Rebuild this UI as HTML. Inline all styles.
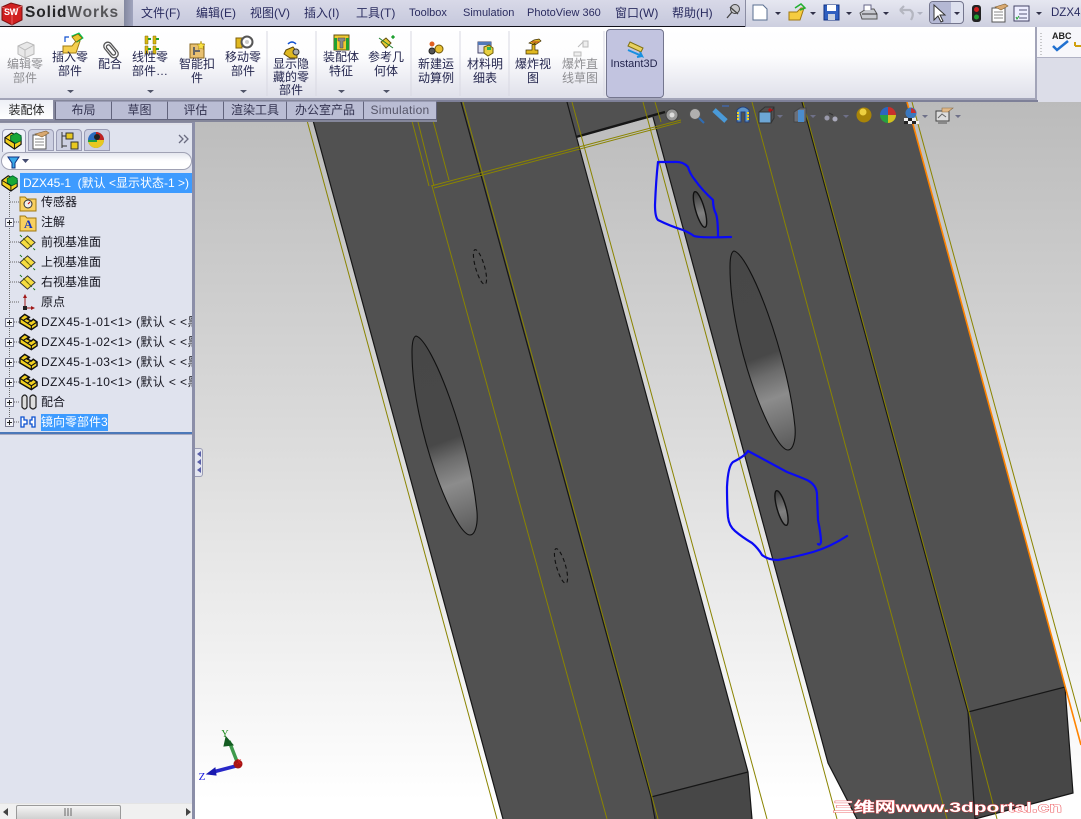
<!DOCTYPE html>
<html><head><meta charset="utf-8">
<style>
html,body{margin:0;padding:0;width:1081px;height:819px;overflow:hidden;background:#fff}
*{box-sizing:border-box}
body{position:relative;font:12px/14px "Liberation Sans","WenQuanYi Zen Hei","Noto Sans CJK SC",sans-serif;color:#222250}
.a{position:absolute;white-space:nowrap}
.c{position:absolute;white-space:nowrap;transform:translateX(-50%);text-align:center}
svg{position:absolute;left:0;top:0}
.m{top:6px;color:#2a2c60}
.l{color:#24264e;line-height:14px}
.g{color:#8e8e92}
.t{position:absolute;top:101px;height:19px;background:#babdd4;border:1px solid #62647c;border-top:1px solid #9a9cb4;text-align:center;line-height:16px;color:#333350}
.r{position:absolute;left:41px;color:#15151f;height:16px;line-height:16px;white-space:nowrap;width:151px;overflow:hidden}
.p{letter-spacing:.4px}
</style></head><body>

<svg width="1081" height="819" viewBox="0 0 1081 819" fill="none">
<defs>
<linearGradient id="bg" x1="0" y1="102" x2="0" y2="800" gradientUnits="userSpaceOnUse"><stop offset="0" stop-color="#bbbbbb"/><stop offset=".55" stop-color="#e0e0e0"/><stop offset="1" stop-color="#ffffff"/></linearGradient>
<linearGradient id="h" gradientUnits="userSpaceOnUse" x1="417" y1="336" x2="490" y2="535"><stop offset="0" stop-color="#474747"/><stop offset=".51" stop-color="#484848"/><stop offset=".6" stop-color="#6c6c6c"/><stop offset=".716" stop-color="#8c8c8c"/><stop offset=".945" stop-color="#5e5e5e"/></linearGradient>
<linearGradient id="s" x1="0" y1="0" x2="0" y2="1"><stop offset="0" stop-color="#3a3a3a"/><stop offset=".6" stop-color="#808080"/><stop offset="1" stop-color="#666"/></linearGradient>
<path id="hole" d="M416 336C432 340 470 440 477 512C478 525 475 535 470 535C455 535 412 430 412 352C412 343 413 337 416 336Z"/>
</defs>
<rect x="195" y="102" width="886" height="717" fill="url(#bg)"/>
<path d="M308 102H907L1065 687 1073 793 975 819H857L828 763 653 117 576 137 748 772 752 819H503Z" fill="#515151"/>
<path d="M651 797L748 772 752 819H655ZM968 712L1065 687 1073 793 975 819Z" fill="#474747"/>
<g stroke="#161616" stroke-width="1.2">
<path d="M308 102L503 819M461 102L651 797 655 819M567 102L748 772 752 819M653 117L828 763 857 819M802 102L968 712 975 819"/>
<path d="M651 797L748 772M968 712L1065 687 1073 793 975 819"/>
<path d="M576 137L665 112" stroke-width="2.4"/>
</g>
<g stroke="#8a8400" stroke-width="1">
<path d="M302 102L497 819M407 102L429 186M413 102L434 186M428 102L449 180M432 186L607 819"/>
<path d="M431 186L681 120M434 188L681 122"/>
<path d="M463 102L652 797 658 819M572 102L767 819M643 102L837 819M655 102L661 122M752 102L947 819M803 102L969 712 997 819M912 102L1081 722"/>
</g>
<path d="M907 102L1081 745" stroke="#ff8400" stroke-width="1.6"/>
<g stroke="#111" stroke-width="1.1">
<use href="#hole" fill="url(#h)"/>
<use href="#hole" fill="url(#h)" transform="translate(318 -85)"/>
<ellipse cx="700" cy="209.500" rx="4.500" ry="18.500" transform="rotate(-16 700 209.500)" fill="url(#s)" stroke-width="1.400"/>
<ellipse cx="781.500" cy="508" rx="4.500" ry="18" transform="rotate(-16 781.500 508)" fill="url(#s)" stroke-width="1.400"/>
<ellipse cx="480" cy="267" rx="4.500" ry="18" transform="rotate(-16 480 267)" stroke-dasharray="4 3"/>
<ellipse cx="561" cy="566" rx="4.500" ry="18" transform="rotate(-16 561 566)" stroke-dasharray="4 3"/>
</g>
<g stroke="#0a0af5" stroke-width="2.200" stroke-linejoin="round" stroke-linecap="round">
<path d="M658 162L673 162Q683 161 688 167Q690 174 695 180Q702 190 713 200Q713 208 716 214Q718 220 718 237M658 162Q656 180 655 205Q655 217 658 220Q670 226 683 230Q690 233 694 236Q700 238 731 237"/>
<path d="M748 451Q745 456 733 462Q728 466 727 487Q727 505 728 517Q729 526 735 531Q742 537 752 543Q758 548 762 555Q768 560 778 560Q795 557 813 552Q830 547 847 536M748 451Q765 460 787 472Q800 477 807 480Q817 485 817 495L818 520Q821 535 821 542Q820 546 818 544"/>
</g>
<!-- triad -->
<path d="M238 764L229 741" stroke="#3f9a4c" stroke-width="3.500"/>
<path d="M226 737L233 745 224 746Z" fill="#145c22" stroke="#145c22"/>
<path d="M236 766L213 772" stroke="#2828c8" stroke-width="3.500"/>
<path d="M207 774L215 768 216 775Z" fill="#1a1ab0" stroke="#1a1ab0"/>
<circle cx="238" cy="764" r="4.500" fill="#a81414"/>
<text x="225" y="737" font-family="Liberation Serif" font-size="10" fill="#1a8a1a" text-anchor="middle">Y</text>
<text x="202" y="780" font-family="Liberation Serif" font-size="11" fill="#1818e0" text-anchor="middle">Z</text>
<text x="239" y="764" font-family="Liberation Serif" font-size="7" fill="#e02020" text-anchor="middle">X</text>
<!-- heads-up view toolbar -->
<g>
<circle cx="672" cy="115" r="6" fill="#9a9a9a" stroke="#444"/><circle cx="672" cy="115" r="2.500" fill="#ddd"/>
<circle cx="695" cy="114" r="5.500" fill="#b0b0b0" stroke="#555"/><path d="M699 118L704 123" stroke="#2f6db5" stroke-width="2"/>
<path d="M714 110L726 121" stroke="#4a9ad8" stroke-width="5"/><path d="M722 106H729" stroke="#3a6ed0"/>
<path d="M737 122V110Q743 104 749 110V122H745V112H741V122Z" fill="#5d93c9" stroke="#23407a"/><path d="M738 112V121M748 112V121" stroke="#f0d020" stroke-width="2" stroke-dasharray="2 1"/>
<rect x="759" y="112" width="12" height="11" fill="#6da6d6" stroke="#333"/><path d="M759 112L765 107H774V118L771 123M771 112L774 107" stroke="#333"/><path d="M768 110h5M770 108v4" stroke="#c00"/>
<path d="M794 112L800 108H806V122H794Z" fill="#6b6f78" stroke="#444"/><rect x="798" y="110" width="6" height="12" fill="#4b8ccc"/>
<circle cx="827" cy="118" r="3" fill="#99a" stroke="#555"/><circle cx="835" cy="119" r="3" fill="#aab" stroke="#555"/><path d="M829 113L833 115" stroke="#333"/>
<circle cx="864" cy="115" r="7.500" fill="#a88408"/><circle cx="863" cy="112" r="3.500" fill="#eed040"/>
<path d="M888 115V107A8 8 0 0 1 896 115Z" fill="#c8302c"/><path d="M888 115V107A8 8 0 0 0 880 115Z" fill="#2c66c0"/><path d="M880 115A8 8 0 0 0 888 123V115Z" fill="#28a040"/><path d="M888 123A8 8 0 0 0 896 115H888Z" fill="#d0c020"/>
<circle cx="911" cy="113" r="5.500" fill="#3a78c0"/><path d="M911 108a5.500 5.500 0 0 1 5 5h-5z" fill="#c83030"/><path d="M904 118h4v3h-4zM912 118h4v3h-4zM908 121h4v3h-4zM916 121h3v3h-3z" fill="#eee"/><path d="M908 118h4v3h-4zM904 121h4v3h-4zM912 121h4v3h-4z" fill="#222"/>
<rect x="936" y="111" width="13" height="10" fill="#ddd" stroke="#444"/><path d="M938 118L942 114 946 117" stroke="#666"/><path d="M942 108H953L948 112H942Z" fill="#e0b888" stroke="#8a6a40" stroke-width=".6"/><path d="M938 123H947" stroke="#555"/>
</g>
<g fill="#6e7088"><path d="M777 115H783L780 118ZM810 115H816L813 118ZM843 115H849L846 118ZM922 115H928L925 118ZM955 115H961L958 118Z"/></g>
</svg>

<!-- watermark -->
<svg width="1081" height="819" viewBox="0 0 1081 819"><text x="833" y="812" font-family="Liberation Sans,WenQuanYi Zen Hei,sans-serif" font-size="14" font-weight="bold" textLength="229" lengthAdjust="spacingAndGlyphs" fill="#fff" stroke="#e8343a" stroke-width=".7" paint-order="stroke">三维网www.3dportal.cn</text></svg>

<!-- top menu bar -->
<div class="a" style="left:0;top:0;width:745px;height:27px;background:linear-gradient(#d8d9e8,#c6c8dc);border-bottom:1px solid #101018"></div>
<div class="a" style="left:0;top:0;width:124px;height:26px;background:linear-gradient(#dedee2,#c6c6ce)"></div>
<div class="a" style="left:124px;top:0;width:9px;height:26px;background:linear-gradient(90deg,#83889f,#a0a4bd)"></div>
<div class="a" style="left:745px;top:0;width:336px;height:27px;background:linear-gradient(#e6e7f1,#cdcfdf);border-left:1px solid #8a8ca2"></div>
<div class="a" style="left:25px;top:3px;font:bold 15.500px/20px 'Liberation Sans',sans-serif;letter-spacing:.9px"><span style="color:#262628">Solid</span><span style="color:#555558">Works</span></div>
<svg width="1081" height="130" viewBox="0 0 1081 130" fill="none">
<path d="M2 7L11 3 22 6V20L12 25 2 20Z" fill="#d02020" stroke="#7a1010"/><path d="M2 7L12 11 22 6M12 11V25" stroke="#f08080" stroke-width=".7"/>
<!-- pin -->
<circle cx="735" cy="9" r="4.500" fill="#c8c8cc" stroke="#444"/><path d="M732 12L727 18M730 7L738 14" stroke="#444" stroke-width="1.300"/>
</svg>
<div class="a" style="left:4px;top:7px;font:bold 9px/10px 'Liberation Sans';color:#fff;letter-spacing:-.3px">SW</div>
<span class="a m" style="left:141px">文件(F)</span><span class="a m" style="left:196px">编辑(E)</span><span class="a m" style="left:250px">视图(V)</span><span class="a m" style="left:304px">插入(I)</span><span class="a m" style="left:356px">工具(T)</span>
<span class="a m" style="left:409px;font-size:11px">Toolbox</span><span class="a m" style="left:463px;font-size:11px">Simulation</span><span class="a m" style="left:527px;font-size:11px">PhotoView 360</span>
<span class="a m" style="left:615px">窗口(W)</span><span class="a m" style="left:672px">帮助(H)</span>
<span class="a" style="left:1051px;top:6px;font-size:11.500px;color:#2a2c60">DZX45</span>
<div class="a" style="left:929px;top:1px;width:35px;height:23px;border:1px solid #74768e;border-radius:4px;background:#dde0ee"></div>
<div class="a" style="left:930px;top:2px;width:21px;height:21px;background:#b4b8d4;border-radius:3px 0 0 3px"></div>

<!-- ribbon -->
<div class="a" style="left:0;top:27px;width:1037px;height:73px;background:linear-gradient(#ffffff 0,#fdfdfe 40%,#dfe0ea 100%);border-right:2px solid #a2a4b8;border-bottom:2px solid #a2a4b8"></div>
<div class="a" style="left:1037px;top:27px;width:44px;height:31px;background:#f7f7fb;border-bottom:1px solid #b0b2c4"></div>
<div class="a" style="left:1037px;top:58px;width:44px;height:44px;background:#dcdde8"></div>
<div class="a" style="left:606px;top:29px;width:58px;height:69px;background:#c2c4e0;border:1px solid #74768e;border-radius:4px"></div>
<div class="a" style="left:0;top:100px;width:437px;height:22px;background:#84869a"></div>
<div class="a" style="left:437px;top:100px;width:601px;height:2px;background:#7e8098"></div>

<svg width="1081" height="130" viewBox="0 0 1081 130" fill="none" style="z-index:2">
<g stroke="#d8d8e2"><path d="M267 31V96M316 31V96M411 31V96M460 31V96M509 31V96M604 31V96"/></g>
<!-- edit part -->
<path d="M18 46L27 42 34 45V54L25 58 18 54Z" fill="#e8e8e8" stroke="#b8b8b8"/><path d="M18 46L25 50 34 45M25 50V58" stroke="#bbb"/>
<!-- insert -->
<path d="M63 46H72L76 41H80L76 53H63Z" fill="#f5cf50" stroke="#a07a10"/><path d="M72 36L79 33 83 38 77 42Z" fill="#2aa040" stroke="#0c5"/><path d="M72 37L78 34 82 38 76 42Z" fill="#e8c830" stroke="#806008" stroke-width=".7"/><path d="M65 42V37H69" stroke="#1050d0" stroke-width="1.200"/>
<!-- mate clip -->
<g transform="rotate(-40 111 50)" stroke="#555" stroke-width="1.300"><rect x="107" y="41" width="8" height="18" rx="4"/><rect x="109" y="44" width="4" height="12" rx="2"/></g>
<!-- linear pattern -->
<path d="M145 36h3v8h-3zM153 36h3v8h-3zM145 46h3v8h-3zM153 46h3v8h-3z" fill="#d8b810" stroke="#806a00" stroke-width=".5"/><path d="M148 38h3v2h-3zM156 38h3v2h-3zM148 48h3v2h-3zM156 48h3v2h-3z" fill="#20a030"/>
<!-- smart fastener -->
<rect x="190" y="44" width="14" height="14" fill="#e8c070" stroke="#8a6820"/><path d="M194 51h6M194 47v8" stroke="#666" stroke-width="2"/><path d="M201 41l1 3 3 .5-2 2 .5 3-2.500-1.500-2.500 1.500.5-3-2-2 3-.5z" fill="#f8e040" stroke="#a08010" stroke-width=".5"/>
<!-- move -->
<path d="M236 38h6v10h-6z" fill="#e0b820" stroke="#806008"/><circle cx="247" cy="42" r="5.500" stroke="#555" stroke-width="2"/><circle cx="247" cy="42" r="2" fill="#ccc"/>
<!-- show hidden -->
<path d="M286 50L293 47 297 52V58H290L284 54Z" fill="#e0b820" stroke="#604a08"/><path d="M288 44q4-4 8 0" stroke="#1050d0" stroke-width="1.500"/><circle cx="296" cy="52" r="3" fill="#aaa" stroke="#333"/>
<!-- assembly feature -->
<rect x="334" y="35" width="15" height="15" fill="#f0c830" stroke="#605010"/><path d="M334 38v12h3V38zM346 38v12h3V38z" fill="#20a030"/><path d="M338 38h7v3h-2v7h-3v-7h-2z" fill="#888" stroke="#444" stroke-width=".5"/>
<!-- reference geometry -->
<path d="M381 42L386 38 391 43 386 48Z" fill="#e8c830" stroke="#605010"/><path d="M379 38L393 48" stroke="#208030"/><path d="M392 36l2 2m0-2l-2 2M393 35v4M391 37h4" stroke="#20a030"/>
<!-- motion study -->
<circle cx="432" cy="51" r="3" fill="#555" stroke="#222"/><circle cx="439" cy="49" r="4" fill="#e8c030" stroke="#705808"/><circle cx="432" cy="44" r="2.500" fill="#e06020"/>
<!-- bom -->
<rect x="478" y="42" width="13" height="11" fill="#dde" stroke="#446"/><rect x="478" y="42" width="13" height="3" fill="#5078b8"/><path d="M484 47L489 45 493 48V53L488 56 484 53Z" fill="#e8d040" stroke="#706008"/><path d="M487 47h4v3h-4z" fill="#30b050"/>
<!-- explode -->
<path d="M526 50h6v-5l3-2v7h3v4h-12zM529 43l5-3 5-1 2 2-6 4z" fill="#e0b820" stroke="#403000" stroke-width=".7"/><path d="M532 42h7" stroke="#c04020"/>
<path d="M574 52h7v4h-7zM578 47l5-5M583 41h5v6h-5z" fill="#eee" stroke="#bbb"/>
<!-- instant3d -->
<path d="M630 42L643 48 641 52 628 46Z" fill="#e8d060" stroke="#807010"/><path d="M628 50L642 56 640 52M642 56L637 57" stroke="#1890e0" stroke-width="2"/>
<g fill="#505468"><path d="M67 90H74L70.500 93ZM147 90H154L150.500 93ZM240 90H247L243.500 93ZM338 90H345L341.500 93ZM383 90H390L386.500 93Z"/></g>
<!-- top right toolbar -->
<path d="M753 5H763L767 9V20H753Z" fill="#fff" stroke="#5a6f90"/>
<path d="M789 12H797L801 8H804L800 20H789Z" fill="#f6cc40" stroke="#a07810"/><path d="M795 8L801 4 805 8 800 10" stroke="#20b030" stroke-width="1.500"/>
<rect x="824" y="5" width="15" height="15" fill="#2f5fc0" stroke="#103080"/><rect x="827" y="5" width="9" height="6" fill="#fff"/><rect x="828" y="14" width="7" height="6" fill="#c8d0e0"/>
<path d="M860 13L866 9H874L877 14V19H862Z" fill="#c8cad0" stroke="#555"/><path d="M864 10V5H871V10" fill="#fff" stroke="#668"/><path d="M862 14h15" stroke="#333"/>
<path d="M900 10H910Q915 13 911 20M900 10L904 6M900 10L904 14" stroke="#b4b6c0" stroke-width="2.200"/>
<path d="M934 5V20L938 16 941 22 943 21 940 15H945Z" fill="#fff" stroke="#333"/>
<rect x="972" y="5" width="9" height="17" rx="3" fill="#222"/><circle cx="976.500" cy="9.500" r="2.500" fill="#d02020"/><circle cx="976.500" cy="17" r="2.500" fill="#20a030"/>
<rect x="992" y="8" width="13" height="14" fill="#fff" stroke="#555"/><path d="M994 12h9M994 15h9M994 18h9" stroke="#888"/><path d="M995 7L1005 4 1008 6 1001 10Z" fill="#d8a870" stroke="#806030" stroke-width=".6"/>
<rect x="1014" y="6" width="15" height="15" fill="#eef" stroke="#446"/><path d="M1019 10h8M1019 14h8M1019 18h8" stroke="#557"/><path d="M1016 17l1 2 2-3" stroke="#20a030"/>
<g fill="#303048"><path d="M775 12H781L778 15ZM810 12H816L813 15ZM846 12H852L849 15ZM883 12H889L886 15ZM954 12H960L957 15ZM1036 12H1042L1039 15Z"/></g><path d="M917 12H923L920 15Z" fill="#b0b2c0"/>
<!-- right ribbon -->
<path d="M1041 33V56" stroke="#999" stroke-dasharray="1 2"/>
<path d="M1053 46L1057 50 1068 41" stroke="#2070d0" stroke-width="2.500"/><path d="M1075 46V42M1075 46H1081" stroke="#d0a010" stroke-width="2"/>
</svg>
<span class="a" style="left:1052px;top:31px;font:bold 9px/10px 'Liberation Sans';color:#222;z-index:3">ABC</span>

<div style="position:absolute;left:0;top:0;z-index:3">
<span class="c l g" style="left:25px;top:57px">编辑零<br>部件</span>
<span class="c l" style="left:70px;top:50px">插入零<br>部件</span>
<span class="c l" style="left:110px;top:57px">配合</span>
<span class="c l" style="left:150px;top:50px">线性零<br>部件…</span>
<span class="c l" style="left:197px;top:57px">智能扣<br>件</span>
<span class="c l" style="left:243px;top:50px">移动零<br>部件</span>
<span class="c l" style="left:291px;top:58px;line-height:13px">显示隐<br>藏的零<br>部件</span>
<span class="c l" style="left:341px;top:50px">装配体<br>特征</span>
<span class="c l" style="left:386px;top:50px">参考几<br>何体</span>
<span class="c l" style="left:436px;top:57px">新建运<br>动算例</span>
<span class="c l" style="left:485px;top:57px">材料明<br>细表</span>
<span class="c l" style="left:533px;top:57px">爆炸视<br>图</span>
<span class="c l g" style="left:580px;top:57px">爆炸直<br>线草图</span>
<span class="c l" style="left:634px;top:57px;font-size:11px">Instant3D</span>
</div>

<!-- tabs -->
<div class="t" style="left:55px;width:57px">布局</div>
<div class="t" style="left:111px;width:57px">草图</div>
<div class="t" style="left:167px;width:57px">评估</div>
<div class="t" style="left:223px;width:64px">渲染工具</div>
<div class="t" style="left:286px;width:78px">办公室产品</div>
<div class="t" style="left:363px;width:74px;color:#555568;letter-spacing:.3px">Simulation</div>
<div class="a" style="left:0;top:100px;width:54px;height:21px;background:linear-gradient(#eef0f6,#fff);border-right:1px solid #8a8ca2;border-bottom:2px solid #8a8ca2;text-align:center;line-height:20px;color:#222">装配体</div>

<!-- left panel -->
<div class="a" style="left:0;top:122px;width:193px;height:697px;background:#e0e3ee"></div>
<div class="a" style="left:0;top:122px;width:193px;height:3px;background:#dfe0e8;border-top:1px solid #8a8ca2"></div>
<div class="a" style="left:192px;top:122px;width:3px;height:697px;background:#8b8ea8"></div>
<div class="a" style="left:0;top:432px;width:192px;height:2px;background:#4b78b8"></div>
<div class="a" style="left:0;top:434px;width:192px;height:1px;background:#a8aac0"></div>
<div class="a" style="left:195px;top:448px;width:8px;height:29px;background:#e4e6f0;border:1px solid #9a9cb4;border-left:0;border-radius:0 3px 3px 0"></div>

<!-- panel tabs -->
<div class="a" style="left:2px;top:129px;width:24px;height:23px;background:#eef0f8;border:1px solid #9a9cb4;border-bottom:0;border-radius:4px 4px 0 0"></div>
<div class="a" style="left:28px;top:129px;width:26px;height:22px;background:#cdd0e2;border:1px solid #9a9cb4;border-radius:4px 4px 0 0"></div>
<div class="a" style="left:56px;top:129px;width:26px;height:22px;background:#cdd0e2;border:1px solid #9a9cb4;border-radius:4px 4px 0 0"></div>
<div class="a" style="left:84px;top:129px;width:26px;height:22px;background:#cdd0e2;border:1px solid #9a9cb4;border-radius:4px 4px 0 0"></div>
<div class="a" style="left:1px;top:152px;width:191px;height:18px;background:linear-gradient(#e4e6ee,#fff 50%);border:1px solid #a0a2b4;border-radius:9px"></div>

<svg width="260" height="819" viewBox="0 0 260 819" fill="none" style="z-index:4">
<defs>
<symbol id="cmp" viewBox="0 0 20 18"><path d="M1 5L6 1 11 4 9 6 13 8 15 6 19 9V13L13 17 1 10Z" fill="#f2d020" stroke="#111" stroke-width="1.500"/><path d="M1 5L13 13V17M13 13L19 9M5 7L10 4M9 10L14 7" stroke="#111" stroke-width="1.200"/></symbol>
<symbol id="pl" viewBox="0 0 18 18"><path d="M9 2L17 9 9 16 1 9Z" fill="#f6dc40" stroke="#333"/><path d="M1 1L17 17" stroke="#107010" stroke-dasharray="3 2"/><path d="M5 5L13 13" stroke="#7a6a10"/></symbol>
<symbol id="asm" viewBox="0 0 20 20"><path d="M1 7L8 2 18 7V14L11 19 1 12Z" fill="#f2d020" stroke="#111" stroke-width="1.200"/><path d="M7 5L13 2 18 5 18 10 12 13 7 10Z" fill="#18a838" stroke="#063"/><path d="M1 7L11 13V19" stroke="#111"/></symbol>
</defs>
<!-- panel tab icons -->
<use href="#asm" x="4" y="131" width="19" height="19"/>
<rect x="33" y="135" width="13" height="14" fill="#fff" stroke="#555"/><path d="M35 139h9M35 142h9M35 145h9" stroke="#888"/><path d="M35 134L46 131 49 133 42 137Z" fill="#d8a870" stroke="#806030" stroke-width=".6"/>
<path d="M62 132V148M62 136h5M62 146h5" stroke="#333"/><rect x="66" y="133" width="7" height="6" fill="#e8c820" stroke="#333"/><rect x="71" y="142" width="7" height="7" fill="#e8c820" stroke="#333"/>
<circle cx="96" cy="140" r="8" fill="#2a6cc0"/><path d="M96 132a8 8 0 0 1 8 8h-8z" fill="#c02020"/><path d="M88 140a8 8 0 0 0 8 8 8 8 0 0 0 8-8z" fill="#e8c820"/><path d="M88 141h9" stroke="#20a040" stroke-width="2"/><circle cx="97" cy="137" r="3" fill="#222"/>
<path d="M179 135l4 4-4 4M184 135l4 4-4 4" stroke="#6a6c80" stroke-width="1.300"/>
<path d="M8 157H19L15 163V168H12V163Z" fill="#38a8e8" stroke="#103080"/><path d="M22 159H29L25.500 163Z" fill="#444c70"/>
<!-- tree lines -->
<path d="M9.500 190V422M10 202H20M14 222H20M10 242H20M10 262H20M10 282H20M10 302H20M14 322H20M14 342H20M14 362H20M14 382H20M14 402H20M14 422H20" stroke="#666" stroke-dasharray="1 1"/>
<g fill="#f2f3f8" stroke="#7a7c90"><rect x="5.500" y="218.500" width="8" height="8"/><rect x="5.500" y="318.500" width="8" height="8"/><rect x="5.500" y="338.500" width="8" height="8"/><rect x="5.500" y="358.500" width="8" height="8"/><rect x="5.500" y="378.500" width="8" height="8"/><rect x="5.500" y="398.500" width="8" height="8"/><rect x="5.500" y="418.500" width="8" height="8"/></g>
<path d="M7 222.500h5M9.500 220v5M7 322.500h5M9.500 320v5M7 342.500h5M9.500 340v5M7 362.500h5M9.500 360v5M7 382.500h5M9.500 380v5M7 402.500h5M9.500 400v5M7 422.500h5M9.500 420v5" stroke="#222"/>
<use href="#asm" x="1" y="174" width="18" height="18"/>
<path d="M20 197h5l2 2h9v12H20Z" fill="#f8d060" stroke="#a07810"/><circle cx="28" cy="204" r="4" fill="#eee" stroke="#333"/><path d="M28 204l2-2" stroke="#c00"/>
<path d="M20 216h5l2 2h9v13H20Z" fill="#f8d060" stroke="#a07810"/>
<use href="#pl" x="19" y="234" width="17" height="17"/><use href="#pl" x="19" y="254" width="17" height="17"/><use href="#pl" x="19" y="274" width="17" height="17"/>
<path d="M25 295V308H33" stroke="#a01818"/><path d="M23 298L25 294 27 298ZM31 306L35 308 31 310Z" fill="#a01818"/><rect x="23" y="306" width="4" height="4" fill="#222"/>
<use href="#cmp" x="19" y="313" width="19" height="18"/><use href="#cmp" x="19" y="333" width="19" height="18"/><use href="#cmp" x="19" y="353" width="19" height="18"/><use href="#cmp" x="19" y="373" width="19" height="18"/>
<path d="M22 397V407Q25 411 27 407V397Q25 393 22 397M30 397V407Q33 411 36 407V397Q33 393 30 397" stroke="#222" stroke-width="1.200" fill="#ddd"/>
<path d="M21 417h3v3h3v4h-3v3h-3ZM35 417h-3v3h-2v4h2v3h3Z" fill="#fff" stroke="#0a50d0" stroke-width="1.300"/>
<!-- handle -->
<path d="M197 454L201 451V457ZM197 462L201 459V465ZM197 470L201 467V473Z" fill="#5a60a8"/>
<!-- scrollbar arrows -->
<path d="M8 808V816L3 812ZM186 808V816L191 812Z" fill="#444"/>
<path d="M65 808v8M68 808v8M71 808v8" stroke="#666"/>
</svg>
<span class="a" style="left:24px;top:218px;font:bold 12px/12px 'Liberation Serif';color:#1030c0;z-index:5">A</span>

<div class="a" style="left:20px;top:173px;width:172px;height:20px;background:#3d9bff;color:#fff;line-height:20px;padding-left:3px;overflow:hidden">DZX45-1&nbsp; (默认 &lt;显示状态-1 &gt;)</div>
<div class="r" style="top:194px">传感器</div>
<div class="r" style="top:214px">注解</div>
<div class="r" style="top:234px">前视基准面</div>
<div class="r" style="top:254px">上视基准面</div>
<div class="r" style="top:274px">右视基准面</div>
<div class="r" style="top:294px">原点</div>
<div class="r p" style="top:314px">DZX45-1-01&lt;1&gt; (默认 &lt; &lt;黑</div>
<div class="r p" style="top:334px">DZX45-1-02&lt;1&gt; (默认 &lt; &lt;黑</div>
<div class="r p" style="top:354px">DZX45-1-03&lt;1&gt; (默认 &lt; &lt;黑</div>
<div class="r p" style="top:374px">DZX45-1-10&lt;1&gt; (默认 &lt; &lt;黑</div>
<div class="r" style="top:394px">配合</div>
<div class="a" style="left:41px;top:414px;height:17px;background:#3d9bff;color:#fff;line-height:17px">镜向零部件3</div>

<!-- scrollbar -->
<div class="a" style="left:0;top:803px;width:192px;height:16px;background:#f0f0f0;border-top:1px solid #e4e4e4"></div>
<div class="a" style="left:16px;top:805px;width:105px;height:14px;background:linear-gradient(#f4f4f4,#d0d0d0);border:1px solid #9a9a9a;border-bottom:0;border-radius:2px 2px 0 0;z-index:1"></div>
</body></html>
